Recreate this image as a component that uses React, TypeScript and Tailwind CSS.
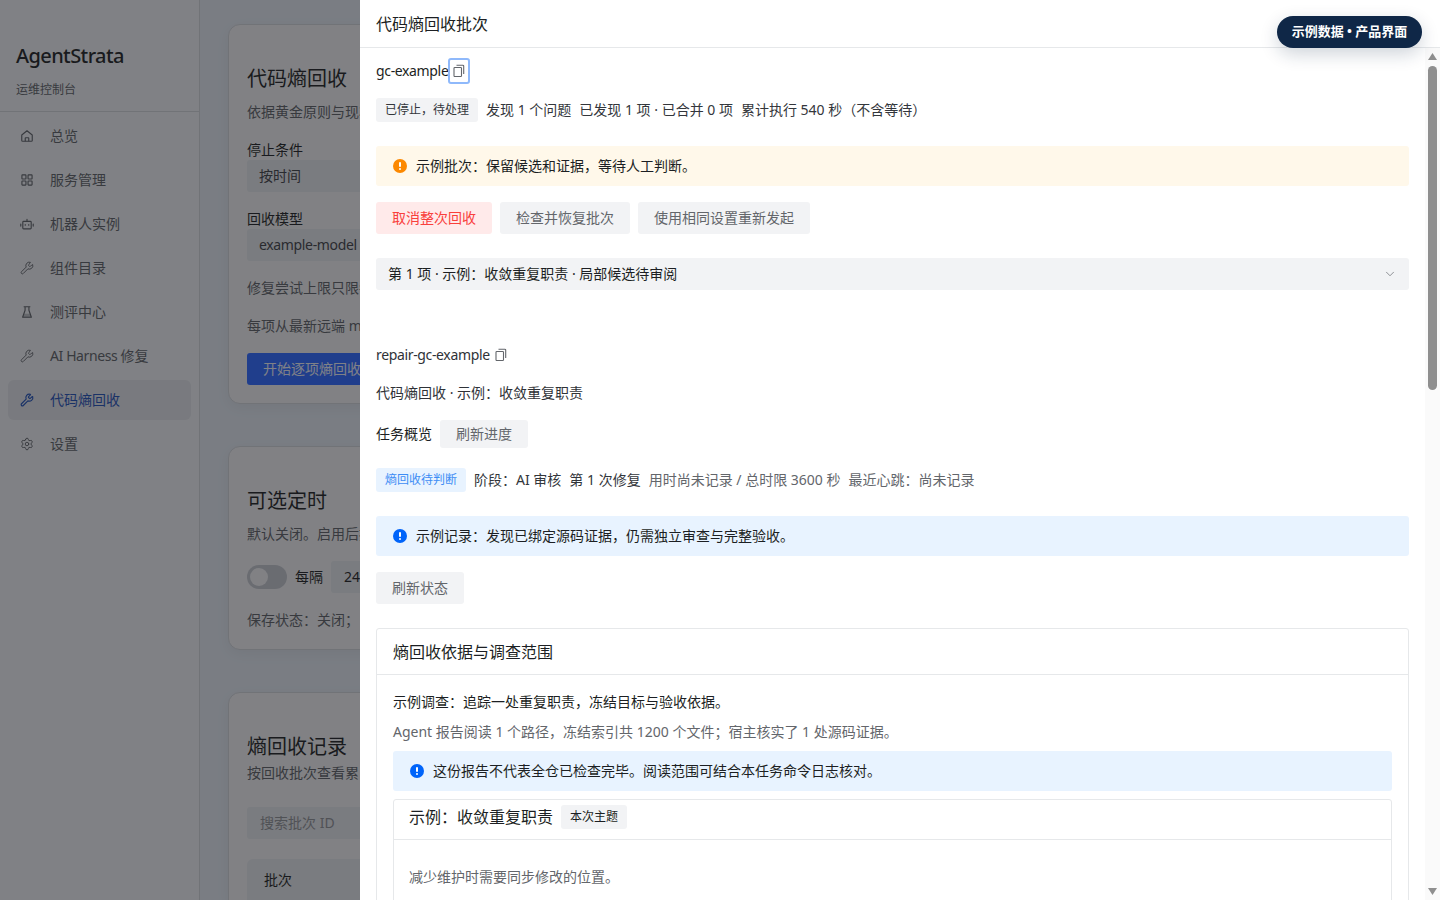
import { Wrench, Settings, ChevronDown } from "lucide-react";

function HomeIcon({ size }: { size: number }) {
  return (
    <svg width={size} height={size} viewBox="0 0 16 16" fill="none" stroke="currentColor" strokeWidth="1.3" strokeLinejoin="round">
      <path d="M2 6.8 8 2l6 4.8V13a1 1 0 0 1-1 1H3a1 1 0 0 1-1-1z" />
      <path d="M6 14v-3.5a.5.5 0 0 1 .5-.5h3a.5.5 0 0 1 .5.5V14" />
    </svg>
  );
}

function GridIcon({ size }: { size: number }) {
  return (
    <svg width={size} height={size} viewBox="0 0 16 16" fill="none" stroke="currentColor" strokeWidth="1.3">
      <rect x="2.2" y="2.2" width="4.6" height="4.6" rx="0.6" />
      <rect x="9.2" y="2.2" width="4.6" height="4.6" rx="0.6" />
      <rect x="2.2" y="9.2" width="4.6" height="4.6" rx="0.6" />
      <rect x="9.2" y="9.2" width="4.6" height="4.6" rx="0.6" />
    </svg>
  );
}

function BotIcon({ size }: { size: number }) {
  return (
    <svg width={size} height={size} viewBox="0 0 16 16" fill="none" stroke="currentColor" strokeWidth="1.3" strokeLinecap="round">
      <rect x="3.2" y="5" width="9.6" height="8.5" rx="1" />
      <path d="M8 5V2.6M.9 8v2.4M15.1 8v2.4M6 8.6v.8M10 8.6v.8" />
    </svg>
  );
}

function BeakerIcon({ size }: { size: number }) {
  return (
    <svg width={size} height={size} viewBox="0 0 16 16" fill="none" stroke="currentColor" strokeWidth="1.3" strokeLinejoin="round">
      <path d="M4.2 2h7.6M5.8 2v4L3 14h10l-2.8-8V2" />
      <path d="M4.4 10h7.2L13 14H3z" fill="currentColor" fillOpacity="0.35" stroke="none" />
    </svg>
  );
}

const navItems = [
  { label: "总览", icon: HomeIcon },
  { label: "服务管理", icon: GridIcon },
  { label: "机器人实例", icon: BotIcon },
  { label: "组件目录", icon: Wrench },
  { label: "测评中心", icon: BeakerIcon },
  { label: "修复", latin: "AI Harness", icon: Wrench },
  { label: "代码熵回收", icon: Wrench, active: true },
  { label: "设置", icon: Settings },
];

function CopyIcon() {
  return (
    <svg width="12" height="14" viewBox="0 0 12 14" fill="none" stroke="currentColor" strokeWidth="1.1">
      <rect x="1" y="3.5" width="7.5" height="9" rx="0.8" />
      <path d="M3.5 1.2h6.3a.9.9 0 0 1 .9.9v8" />
    </svg>
  );
}

function AlertDot({ color }: { color: string }) {
  return (
    <span className={`flex h-3.5 w-3.5 shrink-0 items-center justify-center rounded-full ${color}`}>
      <span className="flex flex-col items-center gap-[1.5px]">
        <span className="h-[5px] w-[2px] rounded-sm bg-white" />
        <span className="h-[2px] w-[2px] rounded-full bg-white" />
      </span>
    </span>
  );
}

function Banner({ tone, children }: { tone: "warn" | "info"; children: React.ReactNode }) {
  return (
    <div
      className={`flex h-10 items-center gap-[9px] rounded-[3px] px-[17px] text-sm leading-5 text-[#1c1f23] ${
        tone === "warn" ? "bg-[#fff8ea]" : "bg-[#e8f3ff]"
      }`}
    >
      <AlertDot color={tone === "warn" ? "bg-[#fc8800]" : "bg-[#0064fa]"} />
      <span>{children}</span>
    </div>
  );
}

function GrayButton({ children, small }: { children: React.ReactNode; small?: boolean }) {
  return (
    <button
      className={`rounded-[3px] bg-[#f2f3f5] px-4 text-sm text-[#63666b] ${small ? "h-7" : "h-8"}`}
    >
      {children}
    </button>
  );
}

function FauxScrollbar() {
  return (
    <div className="flex w-[15px] shrink-0 flex-col items-center bg-[#fafafa] pt-[5px] pb-[5px]">
      <svg width="9" height="7" viewBox="0 0 9 7" className="text-[#8f8f8f]">
        <path d="M4.5 0 9 7H0z" fill="currentColor" />
      </svg>
      <div className="mt-[6px] h-[324px] w-[9px] rounded-full bg-[#8f8f8f]" />
      <svg width="9" height="7" viewBox="0 0 9 7" className="mt-auto text-[#8f8f8f]">
        <path d="M4.5 7 9 0H0z" fill="currentColor" />
      </svg>
    </div>
  );
}

function BackgroundPage() {
  return (
    <div className="flex h-screen overflow-hidden bg-[#dee5ed]">
      <aside className="flex w-[200px] shrink-0 flex-col border-r border-[#ccd0d5] bg-[#eaedf0]">
        <div className="border-b border-[#ccd0d5] px-4 pt-[40px] pb-[11px]">
          <div className="text-xl leading-8 font-medium tracking-[-0.6px] text-[#1c1f23]">AgentStrata</div>
          <div className="mt-[8px] text-xs leading-5 text-[#5a5e64]">运维控制台</div>
        </div>
        <nav className="flex flex-col gap-1 px-2 pt-1">
          {navItems.map((item) => (
            <div
              key={item.label}
              className={`flex h-10 items-center gap-[16px] rounded-md pl-[12px] text-sm ${
                item.active ? "bg-[#dcdfe4] text-[#1f4fb5]" : "text-[#5a5e64]"
              }`}
            >
              <item.icon size={14} strokeWidth={item.active ? 2 : 1.6} />
              <span>
                {item.latin && <span className="tracking-[-0.4px]">{item.latin} </span>}
                {item.label}
              </span>
            </div>
          ))}
        </nav>
      </aside>
      <main className="flex flex-1 flex-col gap-[42px] px-7 pt-6">
        <section className="h-[380px] shrink-0 rounded-xl border border-[#ccd0d5] bg-[#ecedef] px-[18px] pt-[38px] shadow-[0_4px_14px_rgba(0,0,0,0.05)]">
          <h1 className="text-xl leading-8 text-[#1c1f23]">代码熵回收</h1>
          <p className="mt-[7px] text-sm leading-5 text-[#5a5e64]">依据黄金原则与现状</p>
          <div className="mt-[18px] text-sm leading-5 text-[#1c1f23]">停止条件</div>
          <div className="flex h-8 w-[400px] items-center rounded-[3px] bg-[#dfe2e6] px-3 text-sm text-[#3d4045]">按时间</div>
          <div className="mt-[17px] text-sm leading-5 text-[#1c1f23]">回收模型</div>
          <div className="flex h-8 w-[400px] items-center rounded-[3px] bg-[#dfe2e6] px-3 text-sm tracking-[-0.35px] text-[#3d4045]">example-model</div>
          <p className="mt-[17px] text-sm leading-5 text-[#5a5e64]">修复尝试上限只限每一项</p>
          <p className="mt-[18px] text-sm leading-5 text-[#5a5e64]">每项从最新远端 main</p>
          <button className="mt-[17px] h-8 w-[300px] rounded-[3px] bg-[#2a66ff] px-4 text-left text-sm text-[#e8ecf5]">开始逐项熵回收</button>
        </section>
        <section className="h-[204px] shrink-0 rounded-xl border border-[#ccd0d5] bg-[#ecedef] px-[18px] pt-[38px] shadow-[0_4px_14px_rgba(0,0,0,0.05)]">
          <h2 className="text-xl leading-8 text-[#1c1f23]">可选定时</h2>
          <p className="mt-[7px] text-sm leading-5 text-[#5a5e64]">默认关闭。启用后按</p>
          <div className="mt-[17px] flex items-center gap-2 text-sm text-[#1c1f23]">
            <span className="flex h-6 w-10 items-center rounded-full bg-[#bfc2c9] px-[3px]">
              <span className="h-[18px] w-[18px] rounded-full bg-[#ecedef]" />
            </span>
            <span>每隔</span>
            <span className="flex h-8 w-[100px] items-center rounded-[3px] bg-[#dfe2e6] px-[13px]">24</span>
          </div>
          <p className="mt-[17px] text-sm leading-5 text-[#5a5e64]">{"保存状态\uFF1A关闭\uFF1B"}</p>
        </section>
        <section className="flex-1 rounded-t-xl border border-[#ccd0d5] bg-[#ecedef] px-[18px] pt-[38px] shadow-[0_4px_14px_rgba(0,0,0,0.05)]">
          <h2 className="text-xl leading-8 text-[#1c1f23]">熵回收记录</h2>
          <p className="text-sm leading-5 text-[#5a5e64]">按回收批次查看累</p>
          <div className="mt-6 flex h-8 w-[400px] items-center rounded-[3px] bg-[#dfe2e6] px-[13px] text-sm text-[#8b8e93]">搜索批次 ID</div>
          <div className="mt-5 rounded-t-md bg-[#dfe2e6] px-[17px] pt-[11px] pb-3 text-sm text-[#1c1f23]">批次</div>
        </section>
      </main>
    </div>
  );
}

export default function App() {
  return (
    <div className="font-['Noto_Sans','Noto_Sans_CJK_SC',sans-serif]">
      <BackgroundPage />
      <div className="fixed inset-0 bg-[rgba(22,22,26,0.5)]" />

      <div className="fixed top-0 right-0 bottom-0 flex w-[1080px] flex-col bg-white">
        <div className="flex h-12 shrink-0 items-center border-b border-[#e6e8ea] px-4 text-base text-[#1c1f23]">
          代码熵回收批次
        </div>
        <div className="flex min-h-0 flex-1">
          <div className="min-w-0 flex-1 overflow-hidden px-4">
            <div className="flex h-[46px] items-center text-sm text-[#1c1f23]">
              <span className="tracking-[-0.35px]">gc-example</span>
              <span className="flex h-[26px] w-[22px] items-center justify-center rounded-[3px] border-2 border-[#8fb9fb] text-[#63666b]">
                <CopyIcon />
              </span>
            </div>
            <div className="mt-[4px] flex h-6 items-center gap-2 text-sm text-[#33363b]">
              <span className="flex h-6 items-center rounded-[3px] bg-[#f2f3f5] px-[9px] text-xs text-[#33363b]">{"已停止\uFF0C待处理"}</span>
              <span>发现 1 个问题</span>
              <span>已发现 1 项 · 已合并 0 项</span>
              <span>{"累计执行 540 秒\uFF08不含等待\uFF09"}</span>
            </div>
            <div className="mt-6">
              <Banner tone="warn">{"示例批次\uFF1A保留候选和证据\uFF0C等待人工判断。"}</Banner>
            </div>
            <div className="mt-4 flex gap-2">
              <button className="h-8 rounded-[3px] bg-[#ffeaea] px-4 text-sm text-[#f9403c]">取消整次回收</button>
              <GrayButton>检查并恢复批次</GrayButton>
              <GrayButton>使用相同设置重新发起</GrayButton>
            </div>
            <div className="mt-6 flex h-8 items-center justify-between rounded-[3px] bg-[#f2f3f5] pr-3 pl-3 text-sm text-[#1c1f23]">
              <span>{"第 1 项 · 示例\uFF1A收敛重复职责 · 局部候选待审阅"}</span>
              <ChevronDown size={14} strokeWidth={1.2} className="text-[#63666b]" />
            </div>

            <div className="mt-[55px] flex h-5 items-center gap-[5px] text-sm text-[#2f3237]">
              <span className="tracking-[-0.35px]">repair-gc-example</span>
              <span className="text-[#63666b]"><CopyIcon /></span>
            </div>
            <div className="mt-[18px] text-sm leading-5 text-[#2f3237]">{"代码熵回收 · 示例\uFF1A收敛重复职责"}</div>
            <div className="mt-[17px] flex items-center gap-2 text-sm text-[#1c1f23]">
              <span>任务概览</span>
              <GrayButton small>刷新进度</GrayButton>
            </div>
            <div className="mt-5 flex h-6 items-center gap-2 text-sm text-[#33363b]">
              <span className="flex h-6 items-center rounded-[3px] bg-[#e8f3ff] px-[9px] text-xs text-[#3d8df5]">熵回收待判断</span>
              <span>{"阶段\uFF1AAI 审核"}</span>
              <span>第 1 次修复</span>
              <span className="text-[#63666b]">用时尚未记录 / 总时限 3600 秒</span>
              <span className="text-[#63666b]">{"最近心跳\uFF1A尚未记录"}</span>
            </div>
            <div className="mt-6">
              <Banner tone="info">{"示例记录\uFF1A发现已绑定源码证据\uFF0C仍需独立审查与完整验收。"}</Banner>
            </div>
            <div className="mt-4">
              <GrayButton>刷新状态</GrayButton>
            </div>

            <div className="mt-6 rounded-[3px] border border-[#e6e8ea]">
              <div className="flex h-[46px] items-center border-b border-[#e6e8ea] px-4 text-base text-[#1c1f23]">
                熵回收依据与调查范围
              </div>
              <div className="px-4 pt-[17px] pb-6">
                <div className="text-sm leading-5 text-[#1c1f23]">{"示例调查\uFF1A追踪一处重复职责\uFF0C冻结目标与验收依据。"}</div>
                <div className="mt-2.5 text-sm leading-5 text-[#63666b]">{"Agent 报告阅读 1 个路径\uFF0C冻结索引共 1200 个文件\uFF1B宿主核实了 1 处源码证据。"}</div>
                <div className="mt-[9px]">
                  <Banner tone="info">这份报告不代表全仓已检查完毕。阅读范围可结合本任务命令日志核对。</Banner>
                </div>
                <div className="mt-2 rounded-[3px] border border-[#e6e8ea]">
                  <div className="flex h-10 items-center gap-2 border-b border-[#e6e8ea] px-[15px] pb-[5px] text-base text-[#1c1f23]">
                    <span>{"示例\uFF1A收敛重复职责"}</span>
                    <span className="flex h-6 items-center rounded-[3px] bg-[#f2f3f5] px-[9px] text-xs text-[#1c1f23]">本次主题</span>
                  </div>
                  <div className="px-[15px] pt-[27px] pb-10 text-sm leading-5 text-[#63666b]">减少维护时需要同步修改的位置。</div>
                </div>
              </div>
            </div>
          </div>
          <FauxScrollbar />
        </div>
      </div>

      <div className="fixed top-4 right-[18px] flex h-8 w-[145px] items-center justify-center rounded-full bg-[#0f2747] text-[13px] font-bold text-white shadow-[0_6px_18px_rgba(15,39,71,0.2)]">
        示例数据 • 产品界面
      </div>
    </div>
  );
}
